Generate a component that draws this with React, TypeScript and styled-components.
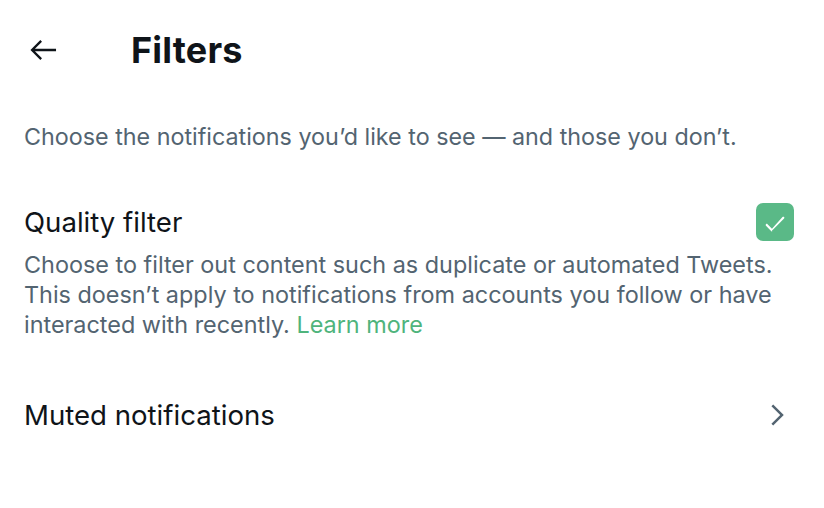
import { FC } from 'react'
import styled, { createGlobalStyle } from 'styled-components'

const GlobalStyle = createGlobalStyle`
  html, body {
    margin: 0;
    padding: 0;
    background: #ffffff;
  }
  body {
    font-family: Inter, "Noto Sans", "Liberation Sans", sans-serif;
    color: #0f1419;
    -webkit-font-smoothing: antialiased;
  }
`

const Page = styled('div')`
  width: 824px;
  min-height: 508px;
  background: #ffffff;
`

const Header = styled('header')`
  height: 100px;
  display: flex;
  align-items: center;
  padding-left: 27px;
`

const BackButton = styled('button')`
  width: 34px;
  height: 34px;
  padding: 0;
  margin: 0 70px 0 0;
  border: none;
  background: transparent;
  color: #0f1419;
  display: flex;
  align-items: center;
  justify-content: center;
  cursor: pointer;
  svg {
    width: 34px;
    height: 34px;
    fill: none;
    stroke: currentColor;
    stroke-width: 1.65;
  }
`

const Title = styled('h1')`
  margin: 0;
  font-size: 36px;
  line-height: 44px;
  font-weight: 700;
  letter-spacing: 0.2px;
`

const Content = styled('main')`
  padding: 0 24px;
`

const Intro = styled('p')`
  margin: 22px 0 0;
  font-size: 23.3px;
  line-height: 30px;
  color: #536471;
`

const Setting = styled('section')`
  margin-top: 51px;
`

const SettingRow = styled('div')`
  display: flex;
  align-items: center;
  justify-content: space-between;
`

const SettingTitle = styled('span')`
  font-size: 27.6px;
  line-height: 32px;
  color: #0f1419;
`

const Check = styled('span')<{ $on: boolean }>`
  width: 38px;
  height: 38px;
  margin-right: 6px;
  border-radius: 7px;
  background: ${({ $on }) => ($on ? '#5ab987' : 'transparent')};
  border: ${({ $on }) => ($on ? 'none' : '2px solid #536471')};
  display: flex;
  align-items: center;
  justify-content: center;
  svg {
    width: 27px;
    height: 27px;
    fill: #ffffff;
  }
`

const Description = styled('p')`
  margin: 9px 0 0;
  font-size: 23.4px;
  line-height: 30px;
  color: #536471;
`

const Link = styled('a')`
  color: #4fb47c;
  text-decoration: none;
`

const NavRow = styled('a')`
  margin-top: 59px;
  display: flex;
  align-items: center;
  justify-content: space-between;
  color: #0f1419;
  text-decoration: none;
  cursor: pointer;
`

const Chevron = styled('span')`
  width: 30px;
  height: 30px;
  margin-right: 8px;
  display: flex;
  svg {
    width: 30px;
    height: 30px;
    fill: #536471;
  }
`

const ArrowLeft: FC = () => (
  <svg viewBox="0 0 24 24" aria-hidden="true">
    <path d="M20.5 12H3.8M10 5.6L3.6 12l6.4 6.4" />
  </svg>
)

const CheckMark: FC = () => (
  <svg viewBox="0 0 24 24" aria-hidden="true">
    <path d="M9 20c-.264 0-.52-.104-.707-.293l-4.785-4.785c-.39-.39-.39-1.023 0-1.414s1.023-.39 1.414 0l3.946 3.945L18.207 7.14c.39-.39 1.023-.39 1.414 0s.39 1.024 0 1.415l-9.914 9.94c-.187.19-.442.294-.707.294z" />
  </svg>
)

const ChevronRight: FC = () => (
  <svg viewBox="0 0 24 24" aria-hidden="true">
    <path d="M14.586 12L7.543 4.96l1.414-1.42L17.414 12l-8.457 8.46-1.414-1.42L14.586 12z" />
  </svg>
)

const App: FC = () => {
  return (
    <Page>
      <GlobalStyle />
      <Header>
        <BackButton aria-label="Back">
          <ArrowLeft />
        </BackButton>
        <Title>Filters</Title>
      </Header>
      <Content>
        <Intro>Choose the notifications you’d like to see — and those you don’t.</Intro>
        <Setting>
          <SettingRow>
            <SettingTitle>Quality filter</SettingTitle>
            <Check $on={true}>
              <CheckMark />
            </Check>
          </SettingRow>
          <Description>
            Choose to filter out content such as duplicate or automated Tweets.
            This doesn’t apply to notifications from accounts you follow or have
            interacted with recently. <Link href="#">Learn more</Link>
          </Description>
        </Setting>
        <NavRow>
          <SettingTitle>Muted notifications</SettingTitle>
          <Chevron>
            <ChevronRight />
          </Chevron>
        </NavRow>
      </Content>
    </Page>
  )
}

export default App
